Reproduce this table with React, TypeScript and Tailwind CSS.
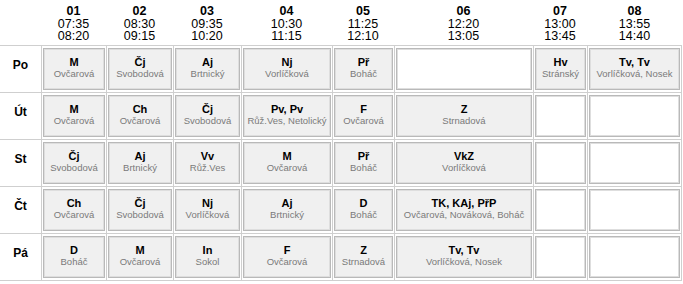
import React from 'react';

type Lesson = { s: string; t: string } | null;

const periods = [
  { n: '01', from: '07:35', to: '08:20' },
  { n: '02', from: '08:30', to: '09:15' },
  { n: '03', from: '09:35', to: '10:20' },
  { n: '04', from: '10:30', to: '11:15' },
  { n: '05', from: '11:25', to: '12:10' },
  { n: '06', from: '12:20', to: '13:05' },
  { n: '07', from: '13:00', to: '13:45' },
  { n: '08', from: '13:55', to: '14:40' },
];

const days: { name: string; lessons: Lesson[] }[] = [
  {
    name: 'Po',
    lessons: [
      { s: 'M', t: 'Ovčarová' },
      { s: 'Čj', t: 'Svobodová' },
      { s: 'Aj', t: 'Brtnický' },
      { s: 'Nj', t: 'Vorlíčková' },
      { s: 'Př', t: 'Boháč' },
      null,
      { s: 'Hv', t: 'Stránský' },
      { s: 'Tv, Tv', t: 'Vorlíčková, Nosek' },
    ],
  },
  {
    name: 'Út',
    lessons: [
      { s: 'M', t: 'Ovčarová' },
      { s: 'Ch', t: 'Ovčarová' },
      { s: 'Čj', t: 'Svobodová' },
      { s: 'Pv, Pv', t: 'Růž.Ves, Netolický' },
      { s: 'F', t: 'Ovčarová' },
      { s: 'Z', t: 'Strnadová' },
      null,
      null,
    ],
  },
  {
    name: 'St',
    lessons: [
      { s: 'Čj', t: 'Svobodová' },
      { s: 'Aj', t: 'Brtnický' },
      { s: 'Vv', t: 'Růž.Ves' },
      { s: 'M', t: 'Ovčarová' },
      { s: 'Př', t: 'Boháč' },
      { s: 'VkZ', t: 'Vorlíčková' },
      null,
      null,
    ],
  },
  {
    name: 'Čt',
    lessons: [
      { s: 'Ch', t: 'Ovčarová' },
      { s: 'Čj', t: 'Svobodová' },
      { s: 'Nj', t: 'Vorlíčková' },
      { s: 'Aj', t: 'Brtnický' },
      { s: 'D', t: 'Boháč' },
      { s: 'TK, KAj, PřP', t: 'Ovčarová, Nováková, Boháč' },
      null,
      null,
    ],
  },
  {
    name: 'Pá',
    lessons: [
      { s: 'D', t: 'Boháč' },
      { s: 'M', t: 'Ovčarová' },
      { s: 'In', t: 'Sokol' },
      { s: 'F', t: 'Ovčarová' },
      { s: 'Z', t: 'Strnadová' },
      { s: 'Tv, Tv', t: 'Vorlíčková, Nosek' },
      null,
      null,
    ],
  },
];

const cols = 'grid grid-cols-[41px_65px_67px_68px_91px_62px_139px_54px_95px]';

const Cell: React.FC<{ lesson: Lesson; last: boolean }> = ({ lesson, last }) => (
  <div className={`border-l border-[#cfcfcf] px-[1px] py-[2px] ${last ? 'border-r' : ''}`}>
    <div
      className={`h-full flex flex-col items-center justify-center pb-[3px] border border-[#b9b9b9] shadow-[inset_0_0_0_1px_#dedede] ${
        lesson ? 'bg-[#f0f0f0]' : 'bg-white'
      }`}
    >
      {lesson && (
        <>
          <div className="text-[11px] leading-[11px] font-bold text-black whitespace-nowrap">{lesson.s}</div>
          <div className="text-[9.5px] leading-[11px] text-[#7a7a7a] whitespace-nowrap">{lesson.t}</div>
        </>
      )}
    </div>
  </div>
);

export default function App() {
  return (
    <div className="w-[683px] h-[284px] bg-white font-['Liberation_Sans',Arial,sans-serif]">
      <div className={`${cols} h-[45px] pt-[5px]`}>
        <div />
        {periods.map((p) => (
          <div key={p.n} className="flex flex-col items-center text-[12.5px] leading-[12.5px] text-black">
            <div className="font-bold">{p.n}</div>
            <div>{p.from}</div>
            <div>{p.to}</div>
          </div>
        ))}
      </div>
      <div className="border-b border-[#cfcfcf] w-[682px]">
        {days.map((d) => (
          <div key={d.name} className={`${cols} h-[47px] border-t border-[#cfcfcf]`}>
            <div className="flex items-center justify-center pb-[9px] text-[12px] font-bold text-black">{d.name}</div>
            {d.lessons.map((l, i) => (
              <Cell key={i} lesson={l} last={i === d.lessons.length - 1} />
            ))}
          </div>
        ))}
      </div>
    </div>
  );
}
